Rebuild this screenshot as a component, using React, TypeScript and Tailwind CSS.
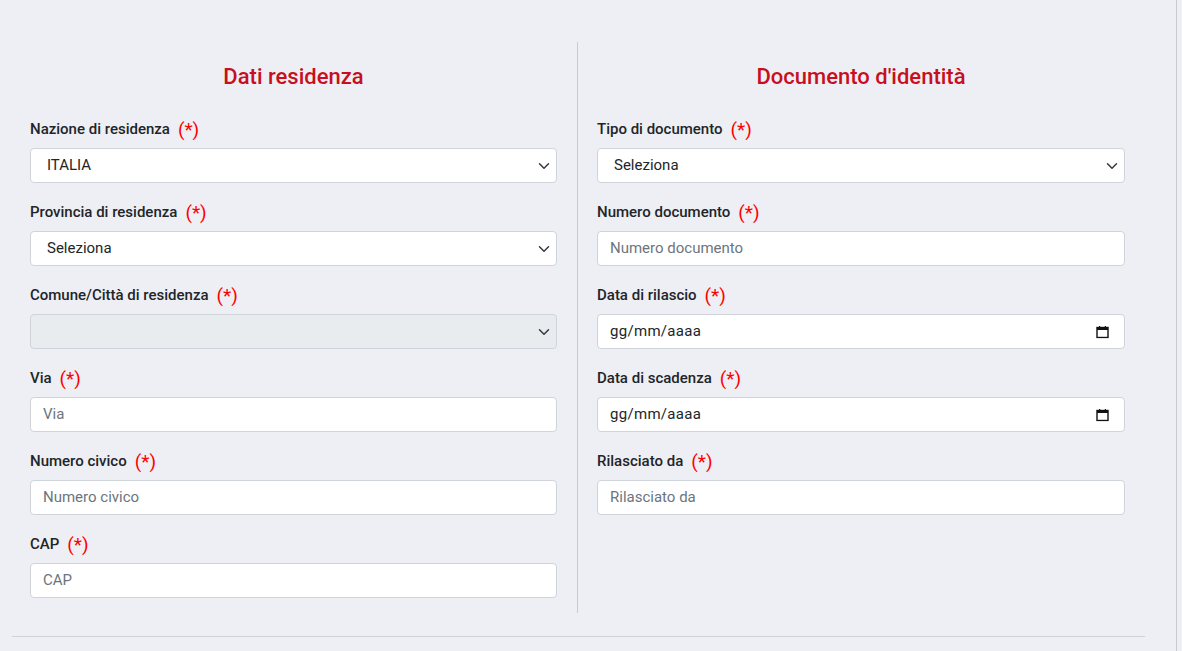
import React from "react";

const Req = () => <span className="ml-2 text-[19px] leading-none font-normal text-[#ff0000]">(*)</span>;

const Chevron = () => (
  <svg width="12" height="12" viewBox="0 0 16 16" className="absolute right-[6px] top-1/2 -translate-y-1/2">
    <path d="M2 5l6 6 6-6" fill="none" stroke="#343a40" strokeWidth="2" strokeLinecap="round" strokeLinejoin="round" />
  </svg>
);

const Cal = () => (
  <svg width="13" height="13" viewBox="0 0 13 13" className="absolute right-[15px] top-1/2 -translate-y-1/2">
    <rect x="1" y="2" width="11" height="10" fill="none" stroke="#111" strokeWidth="1.4" />
    <rect x="1" y="2" width="11" height="2.5" fill="#111" />
    <rect x="3" y="0.5" width="1.2" height="2" fill="#111" />
    <rect x="8.8" y="0.5" width="1.2" height="2" fill="#111" />
  </svg>
);

type F = { label: string; kind: "select" | "input" | "date" | "disabled"; value?: string };

const Field = ({ f }: { f: F }) => {
  const base = "relative h-[35px] w-full rounded-[4px] border border-[#ced4da] flex items-center text-[15px]";
  return (
    <div className="mb-[19px] last:mb-[15px]">
      <div className="flex items-center h-[20px] text-[15px] font-medium text-[#212529] mb-[9px]">
        {f.label}
        <Req />
      </div>
      {f.kind === "select" && (
        <div className={base + " bg-white pl-[16px] text-[#212529]"}>
          {f.value}
          <Chevron />
        </div>
      )}
      {f.kind === "disabled" && (
        <div className={base + " bg-[#e9ecef]"}>
          <Chevron />
        </div>
      )}
      {f.kind === "input" && (
        <div className={base + " bg-white pl-[12px] text-[#6c757d]"}>{f.value}</div>
      )}
      {f.kind === "date" && (
        <div className={base + " bg-white pl-[12px] text-[#212529] tracking-[0.3px]"}>
          gg/mm/aaaa
          <Cal />
        </div>
      )}
    </div>
  );
};

const left: F[] = [
  { label: "Nazione di residenza", kind: "select", value: "ITALIA" },
  { label: "Provincia di residenza", kind: "select", value: "Seleziona" },
  { label: "Comune/Città di residenza", kind: "disabled" },
  { label: "Via", kind: "input", value: "Via" },
  { label: "Numero civico", kind: "input", value: "Numero civico" },
  { label: "CAP", kind: "input", value: "CAP" },
];
const right: F[] = [
  { label: "Tipo di documento", kind: "select", value: "Seleziona" },
  { label: "Numero documento", kind: "input", value: "Numero documento" },
  { label: "Data di rilascio", kind: "date" },
  { label: "Data di scadenza", kind: "date" },
  { label: "Rilasciato da", kind: "input", value: "Rilasciato da" },
];

const Title = ({ t }: { t: string }) => (
  <h2 className="text-center text-[22px] leading-[26px] font-medium text-[#c80f1e] mt-[22px] mb-[29px]">{t}</h2>
);

export default function App() {
  return (
    <div className="w-[1182px] h-[651px] bg-[#eeeff4] overflow-hidden" style={{ fontFamily: "Roboto, 'Liberation Sans', sans-serif" }}>
      <div className="w-[1177px] h-full border-r border-[#c9cbd0] pt-[42px]">
        <div className="w-[1145px] ml-[12px] flex">
          <div className="w-[566px] pl-[18px] pr-[20px] border-r border-[#c9cbd0]">
            <Title t="Dati residenza" />
            {left.map((f) => <Field key={f.label} f={f} />)}
          </div>
          <div className="w-[567px] pl-[19px] pr-[20px]">
            <Title t="Documento d'identità" />
            {right.map((f) => <Field key={f.label} f={f} />)}
          </div>
        </div>
        <div className="w-[1133px] ml-[12px] mt-[23px] border-t border-[#cfd1d6]" />
      </div>
    </div>
  );
}
